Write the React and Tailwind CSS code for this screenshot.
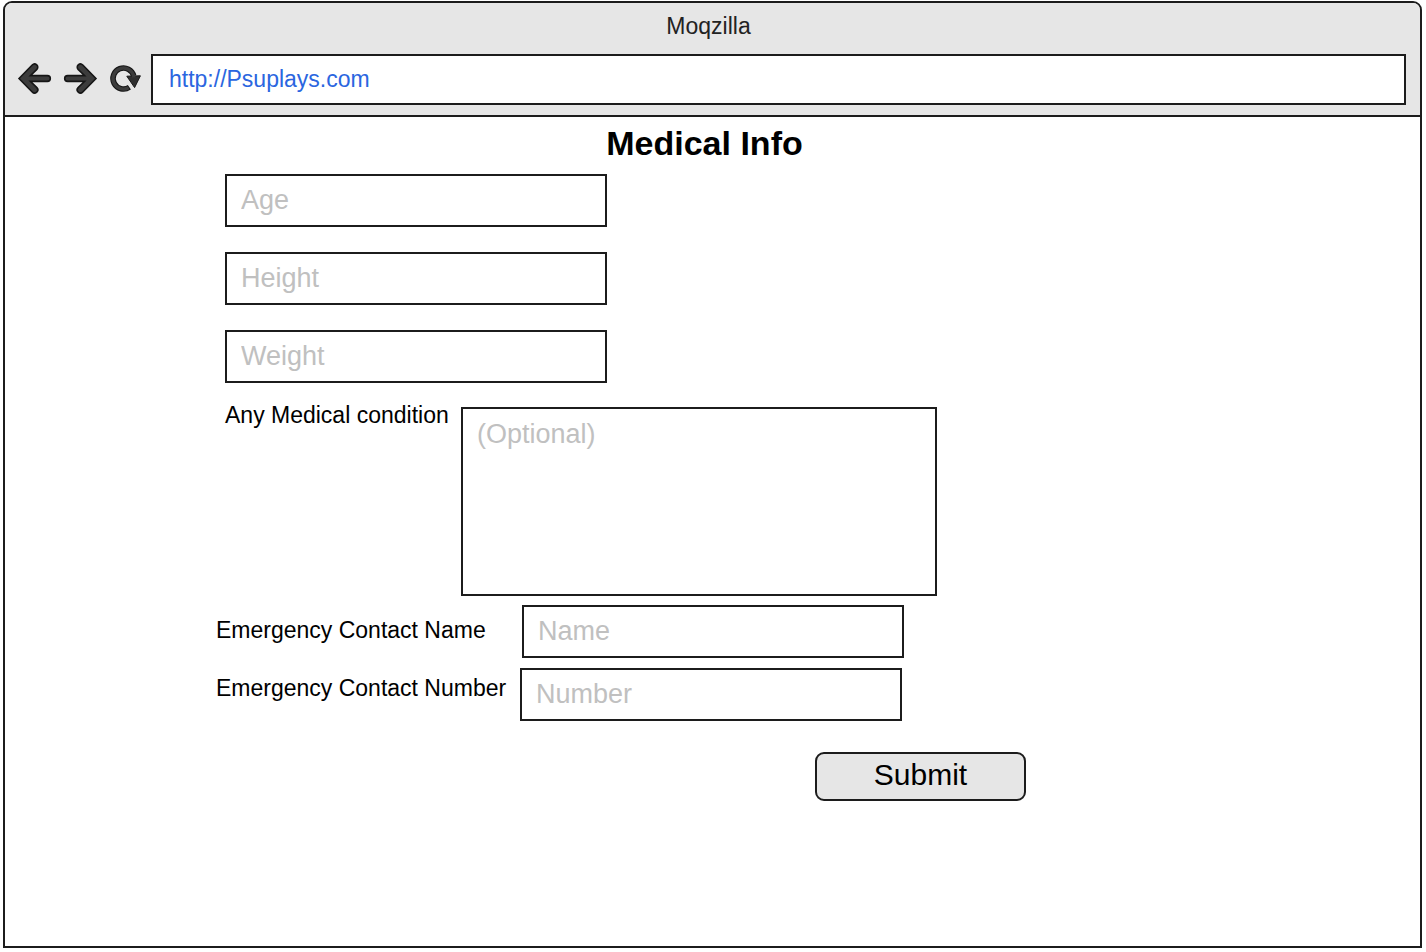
import React from "react";

const fieldClass =
  "block h-[53px] w-[382px] border-2 border-[#1c1c1c] bg-white px-[14px] text-[27px] text-black outline-none placeholder:text-[#c0c0c0] placeholder:opacity-100";

const arrowShape =
  "M0 15.5 L13.2 2 A3 3 0 0 1 17.9 6.4 L11.4 12.6 H28.4 A2.9 2.9 0 0 1 28.4 18.4 H11.4 L17.9 24.6 A3 3 0 0 1 13.2 29 Z";

function BackIcon() {
  return (
    <svg viewBox="0 0 32 32" className="size-8 overflow-visible" aria-hidden="true">
      <path d={arrowShape} fill="#3c3c3c" stroke="#161616" strokeWidth="1.6" />
    </svg>
  );
}

function ForwardIcon() {
  return (
    <svg viewBox="0 0 32 32" className="size-8 overflow-visible" aria-hidden="true">
      <path d={arrowShape} transform="matrix(-1 0 0 1 32 0)" fill="#3c3c3c" stroke="#161616" strokeWidth="1.6" />
    </svg>
  );
}

function ReloadIcon() {
  return (
    <svg viewBox="0 0 32 32" className="size-8 overflow-visible" aria-hidden="true">
      <path d="M20.4 24.2 A10.5 10.5 0 1 1 24.7 12.9" fill="none" stroke="#161616" strokeWidth="5.6" />
      <path d="M17.8 13.2 L31.4 12.8 L25.6 24.6 Z" fill="#303030" stroke="#161616" strokeWidth="1" />
      <path d="M19.6 24.7 A10.5 10.5 0 1 1 24.9 14.4" fill="none" stroke="#3c3c3c" strokeWidth="3.4" />
    </svg>
  );
}

export default function App() {
  return (
    <div className="min-h-screen bg-white font-['Liberation_Sans',Arial,sans-serif] flex flex-col pt-px pr-1 pb-1 pl-[3px] text-black">
      <div className="flex flex-1 flex-col rounded-t-[9px] border-2 border-[#1c1c1c]">
        <header className="rounded-t-[7px] border-b-2 border-[#1c1c1c] bg-[#e6e6e6] pb-[10px]">
          <p className="pt-[10px] pr-2 text-center text-[23px] leading-[26px] text-[#222]">Moqzilla</p>
          <nav className="mt-[15px] flex items-center pr-[14px] pl-[14px]">
            <div className="flex gap-[13px] pr-[10px] pb-[2px]">
              <button type="button" aria-label="Back"><BackIcon /></button>
              <button type="button" aria-label="Forward"><ForwardIcon /></button>
              <button type="button" aria-label="Reload"><ReloadIcon /></button>
            </div>
            <input
              type="text"
              aria-label="Address"
              defaultValue="http://Psuplays.com"
              className="h-[51px] min-w-0 flex-1 border-2 border-[#1c1c1c] bg-white px-4 text-[23px] text-[#2b66e0] outline-none"
            />
          </nav>
        </header>

        <main>
          <h1 className="pt-[6px] pr-4 text-center text-[34px] leading-[40px] font-bold">Medical Info</h1>
          <form className="pt-[11px] pl-[211px]" onSubmit={(e) => e.preventDefault()}>
            <div className="flex flex-col gap-[25px] pl-[9px]">
              <input type="text" aria-label="Age" placeholder="Age" className={fieldClass} />
              <input type="text" aria-label="Height" placeholder="Height" className={fieldClass} />
              <input type="text" aria-label="Weight" placeholder="Weight" className={fieldClass} />
            </div>
            <div className="mt-[18px] flex items-start pl-[9px]">
              <label htmlFor="condition" className="w-[236px] text-[23px] leading-[28px]">Any Medical condition</label>
              <textarea
                id="condition"
                placeholder="(Optional)"
                className="mt-[6px] block h-[189px] w-[476px] resize-none border-2 border-[#1c1c1c] bg-white px-[14px] py-[10px] text-[27px] leading-[30px] outline-none placeholder:text-[#c0c0c0] placeholder:opacity-100"
              />
            </div>
            <div className="mt-[9px] flex items-center">
              <label htmlFor="contact-name" className="w-[306px] pb-[3px] text-[23px] leading-[28px]">Emergency Contact Name</label>
              <input id="contact-name" type="text" placeholder="Name" className={fieldClass} />
            </div>
            <div className="mt-[10px] flex items-center">
              <label htmlFor="contact-number" className="w-[304px] pb-[14px] text-[23px] leading-[28px]">Emergency Contact Number</label>
              <input id="contact-number" type="tel" placeholder="Number" className={fieldClass} />
            </div>
            <div className="mt-[31px] pl-[599px]">
              <button type="submit" className="h-[49px] w-[211px] rounded-[9px] border-2 border-[#1c1c1c] bg-[#e6e6e6] pb-1 text-[30px] leading-[36px]">
                Submit
              </button>
            </div>
          </form>
        </main>
      </div>
    </div>
  );
}
